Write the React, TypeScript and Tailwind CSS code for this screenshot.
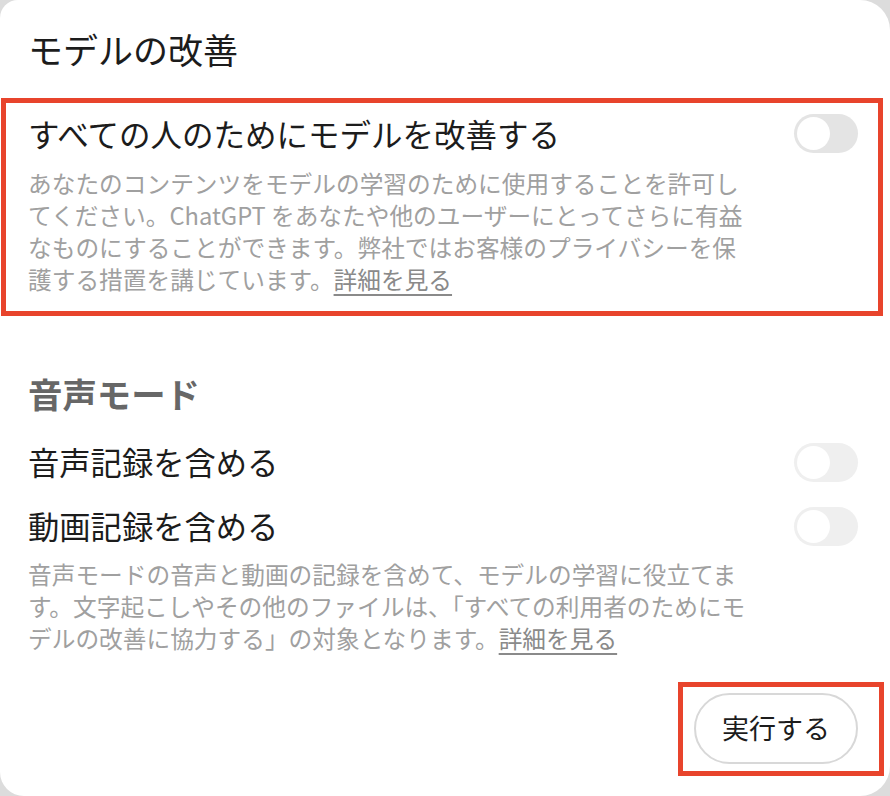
import React from "react";

const jp = { fontFamily: '"Noto Sans CJK JP", "Noto Sans", sans-serif' };

const Toggle = ({ muted }: { muted?: boolean }) => (
  <div
    className={`w-[64px] h-[39px] rounded-full flex items-center pl-[3px] shrink-0 ${
      muted ? "bg-[#efefef]" : "bg-[#e4e4e4]"
    }`}
  >
    <div className="w-[33px] h-[33px] rounded-full bg-white" />
  </div>
);

const Link = ({ children }: { children: React.ReactNode }) => (
  <span className="text-[#8a8a8a] underline underline-offset-[5px] decoration-[1.5px]">
    {children}
  </span>
);

const App = () => {
  return (
    <div
      className="w-[890px] h-[796px] bg-[#dcdcdc] overflow-hidden"
      style={jp}
    >
      <div className="w-full h-full bg-white rounded-tl-[18px] rounded-tr-[30px] rounded-br-[30px] rounded-bl-[24px] flex flex-col">
        {/* model improvement */}
        <h1 className="pl-[28px] pt-[27px] text-[35px] leading-[44px] text-[#1c1c1c] font-normal">
          モデルの改善
        </h1>

        <section className="mt-[27px] ml-[1px] mr-[7px] border-[5px] border-[#e8442c] pl-[22px] pr-[20px] pt-[10px] pb-[16px]">
          <div className="flex items-center justify-between h-[40px]">
            <span className="text-[31.5px] leading-[40px] text-[#1c1c1c]">
              すべての人のためにモデルを改善する
            </span>
            <Toggle />
          </div>
          <div className="mt-[14px] text-[23.7px] leading-[32px] text-[#a0a0a0] whitespace-nowrap">
            <div>あなたのコンテンツをモデルの学習のために使用することを許可し</div>
            <div>てください。ChatGPT をあなたや他のユーザーにとってさらに有益</div>
            <div>なものにすることができます。弊社ではお客様のプライバシーを保</div>
            <div>
              護する措置を講じています。<Link>詳細を見る</Link>
            </div>
          </div>
        </section>

        {/* voice mode */}
        <h2 className="mt-[55px] pl-[28px] text-[34.4px] leading-[44px] font-bold text-[#676767]">
          音声モード
        </h2>
        <div className="mt-[15px] pl-[28px] pr-[32px]">
          <div className="flex items-center justify-between h-[64px]">
            <span className="text-[31.3px] leading-[40px] text-[#1c1c1c]">
              音声記録を含める
            </span>
            <Toggle muted />
          </div>
          <div className="flex items-center justify-between h-[64px]">
            <span className="text-[31.3px] leading-[40px] text-[#1c1c1c]">
              動画記録を含める
            </span>
            <Toggle muted />
          </div>
          <div className="text-[23.7px] leading-[32px] text-[#a0a0a0] whitespace-nowrap">
            <div>音声モードの音声と動画の記録を含めて、モデルの学習に役立てま</div>
            <div>す。文字起こしやその他のファイルは、「すべての利用者のためにモ</div>
            <div>
              デルの改善に協力する」の対象となります。<Link>詳細を見る</Link>
            </div>
          </div>
        </div>

        <div className="mt-[28px] flex justify-end pr-[6px]">
          <div className="border-[5px] border-[#e8442c] pl-[11px] pr-[21px] pt-[6px] pb-[7px]">
            <button className="w-[164px] h-[71px] rounded-full border-2 border-[#d8d8d8] bg-white text-[27px] text-[#1c1c1c] flex items-center justify-center">
              実行する
            </button>
          </div>
        </div>
      </div>
    </div>
  );
};

export default App;
